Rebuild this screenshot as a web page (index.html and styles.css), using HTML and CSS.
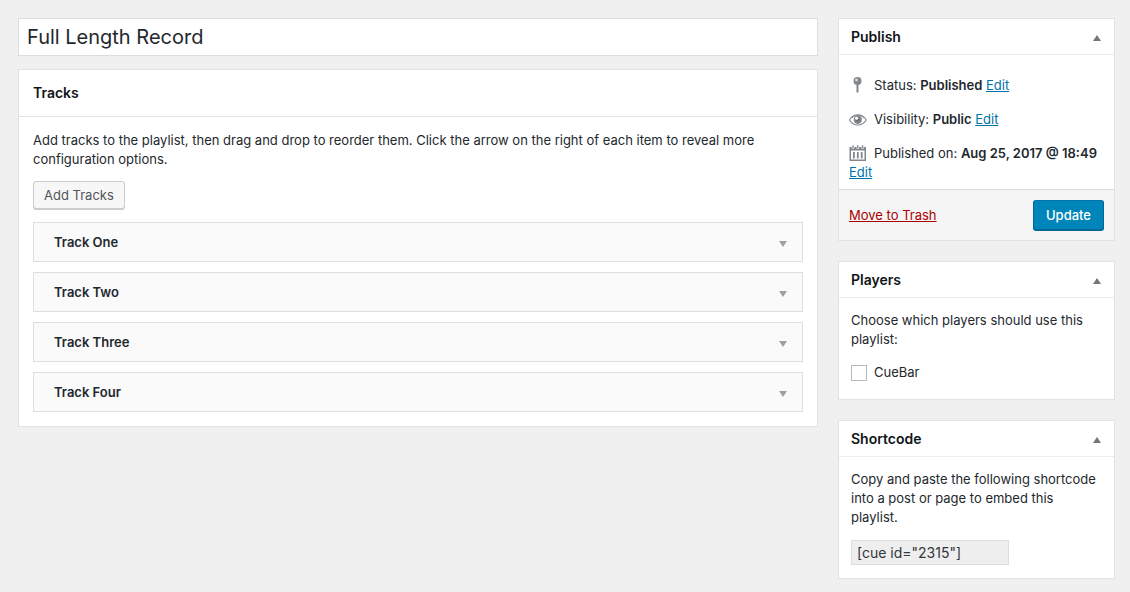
FILE: index.html
```html
<!DOCTYPE html>
<html lang="en">
<head>
<meta charset="utf-8">
<title>Edit Playlist</title>
<link rel="stylesheet" href="styles.css">
</head>
<body>
<div class="layout">
  <main class="main">
    <input class="title" type="text" aria-label="Playlist title" value="Full Length Record">
    <section class="box">
      <h2 class="box-title box-title-large">Tracks</h2>
      <div class="tracks-body">
        <p class="text">Add tracks to the playlist, then drag and drop to reorder them. Click the arrow on the right of each item to reveal more configuration options.</p>
        <button class="button" type="button">Add Tracks</button>
        <ol class="tracks">
          <li class="track"><span>Track One</span><button class="toggle toggle-down" type="button" aria-label="Expand Track One"></button></li>
          <li class="track"><span>Track Two</span><button class="toggle toggle-down" type="button" aria-label="Expand Track Two"></button></li>
          <li class="track"><span>Track Three</span><button class="toggle toggle-down" type="button" aria-label="Expand Track Three"></button></li>
          <li class="track"><span>Track Four</span><button class="toggle toggle-down" type="button" aria-label="Expand Track Four"></button></li>
        </ol>
      </div>
    </section>
  </main>
  <aside class="sidebar">
    <section class="box">
      <h2 class="box-title">Publish <button class="toggle" type="button" aria-label="Collapse Publish"></button></h2>
      <div class="publish-body">
        <p class="status"><svg class="icon" viewBox="0 0 18 18" aria-hidden="true"><circle cx="8.500" cy="5" r="4" fill="#82878c"/><path d="M7.500 8h2v8l-1 1-1-1z" fill="#82878c"/><circle cx="7.500" cy="4" r="1.400" fill="#d5d8da"/></svg>Status: <b>Published</b> <a href="#status">Edit</a></p>
        <p class="status"><svg class="icon" viewBox="0 0 18 18" aria-hidden="true"><path d="M.5 10C2.400 6.800 5.400 4.800 8.800 4.800S15.300 6.800 17.200 10c-1.900 3-4.900 5-8.400 5S2.400 13 .5 10z" fill="#fff" stroke="#82878c" stroke-width="1.100"/><path d="M3 8C4.600 6 6.700 5.300 8.800 5.300S13 6 14.700 8" fill="none" stroke="#82878c"/><circle cx="8.800" cy="9.800" r="4.100" fill="#82878c"/><circle cx="8.800" cy="9.800" r="2" fill="#686e73"/><circle cx="7.600" cy="8.200" r="1.500" fill="#fff"/></svg>Visibility: <b>Public</b> <a href="#visibility">Edit</a></p>
        <p class="status"><svg class="icon" viewBox="0 0 18 18" aria-hidden="true"><path d="M.5 3h16.500v14H.5z" fill="#82878c"/><path d="M3 1h2v3.500H3zM7.800 1h2v3.500h-2zM12.600 1h2v3.500h-2z" fill="#82878c" stroke="#fff" stroke-width=".6"/><path d="M2 6.500h13.500v9H2z" fill="#fff"/><path d="M4 8h1.800v6.500H4zM7.900 8h1.800v6.500H7.900zM11.800 8h1.800v6.500h-1.800z" fill="#82878c"/></svg>Published on: <b>Aug 25, 2017 @ 18:49</b> <a href="#date">Edit</a></p>
      </div>
      <div class="publish-footer">
        <a class="trash" href="#trash">Move to Trash</a>
        <button class="button button-primary" type="button">Update</button>
      </div>
    </section>
    <section class="box">
      <h2 class="box-title">Players <button class="toggle" type="button" aria-label="Collapse Players"></button></h2>
      <div class="box-body">
        <p class="text">Choose which players should use this playlist:</p>
        <label class="choice"><input class="checkbox" type="checkbox">CueBar</label>
      </div>
    </section>
    <section class="box">
      <h2 class="box-title">Shortcode <button class="toggle" type="button" aria-label="Collapse Shortcode"></button></h2>
      <div class="box-body">
        <p class="text">Copy and paste the following shortcode into a post or page to embed this playlist.</p>
        <input class="shortcode" type="text" aria-label="Shortcode" readonly value='[cue id="2315"]'>
      </div>
    </section>
  </aside>
</div>
</body>
</html>
```
FILE: styles.css
```css
* { box-sizing: border-box; }

body {
  margin: 0;
  background: #f0f0f0;
  color: #23282d;
  font: 13px/19px Inter, "Liberation Sans", sans-serif;
}

input, button { font: inherit; }
h2, p, ol { margin: 0; padding: 0; }
a { color: #0073aa; }
b { font-weight: 600; }

.layout {
  display: grid;
  grid-template-columns: minmax(0, 1fr) 277px;
  gap: 20px;
  padding: 18px 15px 13px 18px;
}

.main {
  display: flex;
  flex-direction: column;
  gap: 13px;
}

.sidebar {
  display: flex;
  flex-direction: column;
  gap: 20px;
}

.title {
  width: 100%;
  height: 38px;
  padding: 0 8px;
  border: 1px solid #ddd;
  background: #fff;
  color: #23282d;
  font-size: 20px;
}

.box {
  border: 1px solid #e2e2e2;
  background: #fff;
}

.box-title {
  display: flex;
  align-items: center;
  justify-content: space-between;
  padding: 8px 12px;
  border-bottom: 1px solid #ececec;
  color: #111518;
  font-size: 14px;
  font-weight: 600;
}

.box-title-large {
  padding: 13px 14px 14px;
  border-color: #e2e2e2;
}

.toggle {
  width: 10px;
  height: 18px;
  padding: 0;
  border: 0;
  background: none;
}

.toggle::before {
  content: "";
  display: block;
  margin: 3px 1px 0;
  border: 4px solid transparent;
  border-top: 0;
  border-bottom: 6px solid #72777c;
}

.toggle-down::before {
  border-top: 6px solid #a0a0a0;
  border-bottom: 0;
}

.tracks-body { padding: 14px; }
.tracks-body .text { margin-bottom: 12px; }

.button {
  height: 28px;
  padding: 0 10px;
  border: 1px solid #ccc;
  border-radius: 3px;
  background: #f7f7f7;
  box-shadow: 0 1px 0 #ccc;
  color: #50555a;
}

.tracks {
  display: flex;
  flex-direction: column;
  gap: 10px;
  margin-top: 13px;
  list-style: none;
}

.track {
  display: flex;
  align-items: center;
  justify-content: space-between;
  min-height: 40px;
  padding: 0 14px 0 20px;
  border: 1px solid #dfdfdf;
  background: #fafafa;
  font-weight: 600;
}

.publish-body {
  display: flex;
  flex-direction: column;
  gap: 15px;
  padding: 21px 10px 7px;
}

.icon {
  width: 18px;
  height: 18px;
  margin-right: 7px;
  vertical-align: -4px;
}

.publish-footer {
  display: flex;
  align-items: center;
  justify-content: space-between;
  padding: 10px;
  border-top: 1px solid #ddd;
  background: #f5f5f5;
}

.trash { color: #a00; }

.button-primary {
  height: 30px;
  padding: 0 12px;
  border-color: #0073aa #006799 #006799;
  background: #0085ba;
  box-shadow: 0 1px 0 #006799;
  color: #fff;
  font-weight: 500;
}

.box-body { padding: 13px 12px; }

.choice {
  display: flex;
  align-items: center;
  gap: 7px;
  margin: 14px 0 4px;
}

.checkbox {
  appearance: none;
  width: 16px;
  height: 16px;
  margin: 0;
  border: 1px solid #b4b9be;
  background: #fff;
}

.shortcode {
  display: block;
  width: 158px;
  height: 25px;
  margin-top: 13px;
  padding: 0 5px;
  border: 1px solid #ddd;
  background: #eee;
  color: #32373c;
  font-size: 14px;
}
```
